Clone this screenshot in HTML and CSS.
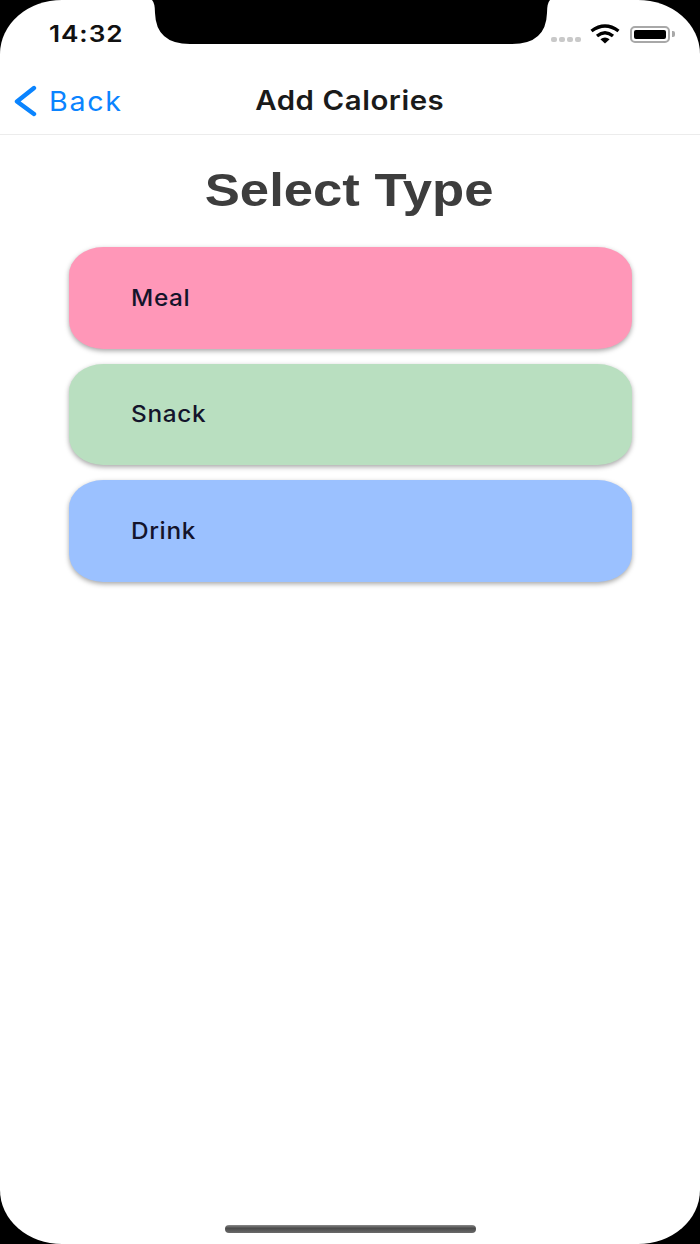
FILE: index.html
```html
<!DOCTYPE html>
<html lang="en">
<head>
  <meta charset="UTF-8">
  <meta name="viewport" content="width=device-width, initial-scale=1.0">
  <title>Add Calories</title>
  <link rel="stylesheet" href="styles.css">
</head>
<body>
  <div class="screen">
    <!-- status bar -->
    <div class="status-bar">
      <span class="time">14:32</span>
      <div class="status-icons">
        <div class="signal">
          <span></span><span></span><span></span><span></span>
        </div>
        <svg class="wifi" viewBox="0 0 30 20" width="30" height="20">
          <path d="M1.5 7 Q15 -3 28.5 7" fill="none" stroke="#000" stroke-width="3.4"/>
          <path d="M7 12 Q15 5.6 23 12" fill="none" stroke="#000" stroke-width="3.4"/>
          <path d="M10.4 15.2 Q15 11.6 19.6 15.2 L15 19.6 Z" fill="#000"/>
        </svg>
        <div class="battery">
          <div class="battery-level"></div>
        </div>
        <div class="battery-cap"></div>
      </div>
    </div>

    <!-- nav bar -->
    <nav class="nav-bar">
      <a class="back" href="#">
        <svg class="back-icon" viewBox="0 0 24 32" width="24" height="32">
          <path d="M21 3 L4 16.5 L21 29" fill="none" stroke="#0a84ff" stroke-width="4.4" stroke-linecap="round" stroke-linejoin="round"/>
        </svg>
        <span class="back-label">Back</span>
      </a>
      <span class="nav-title">Add Calories</span>
    </nav>

    <!-- content -->
    <main class="content">
      <h1 class="page-title"><span>Select Type</span></h1>
      <div class="type-list">
        <a class="type-card meal" href="#"><span>Meal</span></a>
        <a class="type-card snack" href="#"><span>Snack</span></a>
        <a class="type-card drink" href="#"><span>Drink</span></a>
      </div>
    </main>

    <svg class="notch" viewBox="0 0 402 44" width="402" height="44">
      <path d="M2 0 Q5 3 5 13 Q6 44 40 44 H362 Q396 44 397 13 Q397 3 400 0 Z" fill="#000"/>
    </svg>
    <div class="home-indicator"></div>
  </div>
</body>
</html>
```

FILE: styles.css
```css
* {
  margin: 0;
  padding: 0;
  box-sizing: border-box;
}

body {
  background: #000;
  width: 700px;
  height: 1244px;
  overflow: hidden;
  font-family: 'Inter', 'Liberation Sans', sans-serif;
}

a {
  text-decoration: none;
  color: inherit;
}

.screen {
  position: relative;
  width: 700px;
  height: 1244px;
  background: #fff;
  border-radius: 62px / 54px;
  overflow: hidden;
}

/* status bar */
.status-bar {
  height: 66px;
  display: flex;
  justify-content: space-between;
  align-items: flex-start;
  padding: 21px 25px 0 49px;
}

.time {
  display: block;
  font-size: 23px;
  line-height: 26px;
  font-weight: 600;
  letter-spacing: 0.8px;
  color: #111;
  transform: scaleX(1.14);
  transform-origin: left center;
}

.status-icons {
  display: flex;
  align-items: center;
  padding-top: 3px;
}

.signal {
  display: flex;
  gap: 2px;
  margin-top: 10px;
  margin-right: 9px;
}

.signal span {
  width: 6px;
  height: 5px;
  border-radius: 2px;
  background: #c9c9c9;
}

.wifi {
  margin-right: 10px;
}

.battery {
  width: 40px;
  height: 17px;
  border: 2px solid #a8a8a8;
  border-radius: 5px;
  padding: 2px;
}

.battery-level {
  height: 100%;
  background: #000;
  border-radius: 2px;
}

.battery-cap {
  width: 3px;
  height: 6px;
  margin-left: 2px;
  background: #a8a8a8;
  border-radius: 0 2px 2px 0;
}

/* nav bar */
.nav-bar {
  position: relative;
  height: 69px;
  display: flex;
  align-items: center;
  justify-content: center;
  border-bottom: 1px solid #ececec;
}

.back {
  position: absolute;
  left: 13px;
  top: 17px;
  display: flex;
  align-items: center;
  gap: 12px;
  color: #0a84ff;
}

.back-label {
  display: block;
  padding-top: 3px;
  font-size: 27px;
  line-height: 32px;
  letter-spacing: 1.6px;
  transform: scaleX(1.06);
  transform-origin: left center;
}

.nav-title {
  display: block;
  font-size: 27px;
  font-weight: 600;
  color: #1a1a1a;
  letter-spacing: 0.5px;
  transform: scaleX(1.09);
}

/* content */
.content {
  padding: 27px 68px 0 69px;
}

.page-title {
  font-family: 'Liberation Sans', sans-serif;
  font-size: 46px;
  line-height: 56px;
  font-weight: 700;
  color: #3d3d3d;
  text-align: center;
  margin-bottom: 29px;
}

.page-title span {
  display: inline-block;
  transform: translateX(-1px) scaleX(1.145);
}

.type-list {
  display: flex;
  flex-direction: column;
  gap: 15px;
}

.type-card {
  display: flex;
  align-items: center;
  height: 101.5px;
  padding-left: 62px;
  border-radius: 34px / 28px;
  box-shadow: 0 2px 5px rgba(0, 0, 0, 0.35);
  font-size: 23px;
  font-weight: 500;
  letter-spacing: 0.6px;
  color: #14142b;
}

.type-card span {
  display: block;
  transform: scaleX(1.06);
  transform-origin: left center;
}

.meal {
  background: #ff97b8;
}

.snack {
  background: #b9dfc0;
}

.drink {
  background: #9bc1ff;
}

/* overlays */
.notch {
  position: absolute;
  top: 0;
  left: 150px;
}

.home-indicator {
  position: absolute;
  left: 225px;
  bottom: 11px;
  width: 251px;
  height: 8px;
  border-radius: 4px;
  background: linear-gradient(#8a8a8a, #4a4a4a 40%, #6a6a6a);
}
```
